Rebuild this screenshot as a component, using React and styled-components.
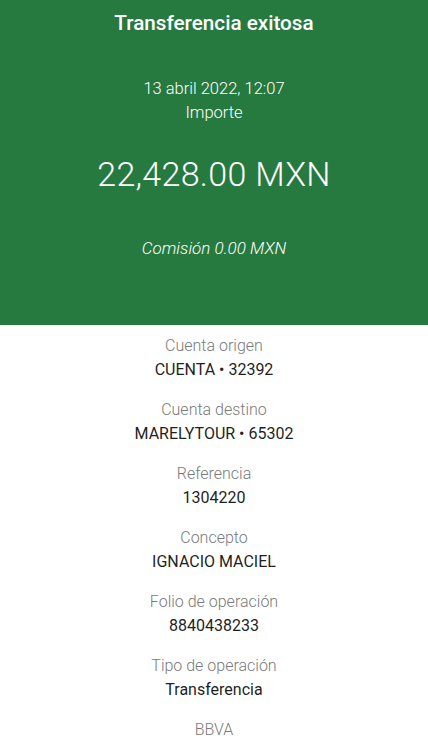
import React from "react";
import styled, { createGlobalStyle } from "styled-components";

const Global = createGlobalStyle`
  html, body { margin: 0; padding: 0; background: #fff; }
  body { font-family: "Roboto", "Liberation Sans", sans-serif; }
`;

const Page = styled.div`
  width: 428px;
  height: 749px;
  overflow: hidden;
  background: #fff;
`;

const Header = styled.header`
  height: 325px;
  background: #277a3f;
  color: #fff;
  text-align: center;
  padding-top: 11px;
  box-sizing: border-box;
`;

const Title = styled.h1`
  margin: 0;
  font-size: 20.7px;
  line-height: 24px;
  font-weight: 500;
`;

const Line = styled.div`
  font-size: ${(p) => (p.$italic ? 17 : 16.5)}px;
  line-height: 24px;
  font-weight: 300;
  margin-top: ${(p) => p.$mt || 0}px;
  font-style: ${(p) => (p.$italic ? "italic" : "normal")};
`;

const Amount = styled.div`
  margin-top: 29px;
  font-size: 34px;
  line-height: 40px;
  font-weight: 300;
  letter-spacing: 0.3px;
`;

const Details = styled.section`
  display: flex;
  flex-direction: column;
  gap: 16px;
  padding-top: 9px;
  text-align: center;
`;

const Item = styled.div`
  display: flex;
  flex-direction: column;
`;

const Label = styled.span`
  font-size: 16px;
  line-height: 24px;
  color: #7a7a7a;
  font-weight: 300;
`;

const Value = styled.span`
  font-size: 16px;
  line-height: 24px;
  color: #1f1f1f;
  font-weight: 400;
`;

const items = [
  ["Cuenta origen", "CUENTA • 32392"],
  ["Cuenta destino", "MARELYTOUR • 65302"],
  ["Referencia", "1304220"],
  ["Concepto", "IGNACIO MACIEL"],
  ["Folio de operación", "8840438233"],
  ["Tipo de operación", "Transferencia"],
  ["BBVA", ""],
];

export default function App() {
  return (
    <Page>
      <Global />
      <Header>
        <Title>Transferencia exitosa</Title>
        <Line $mt={42}>13 abril 2022, 12:07</Line>
        <Line>Importe</Line>
        <Amount>22,428.00 MXN</Amount>
        <Line $mt={42} $italic>Comisión 0.00 MXN</Line>
      </Header>
      <Details>
        {items.map(([l, v]) => (
          <Item key={l}>
            <Label>{l}</Label>
            {v && <Value>{v}</Value>}
          </Item>
        ))}
      </Details>
    </Page>
  );
}
